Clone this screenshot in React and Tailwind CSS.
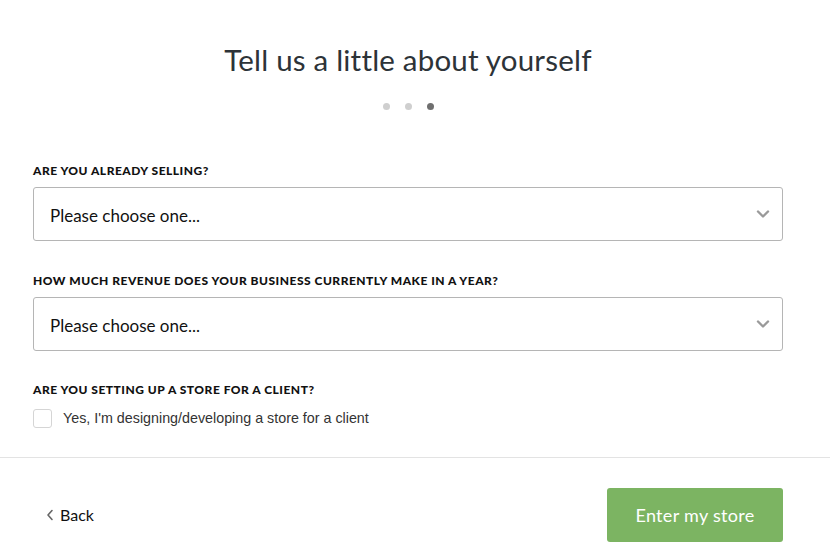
import React from "react";

function Chevron() {
  return (
    <svg className="w-[14px] h-[14px] text-[#9a9a9a]" viewBox="0 0 14 14" fill="none" stroke="currentColor">
      <path d="M2 4.5l5 5 5-5" strokeWidth={2.4} strokeLinecap="round" strokeLinejoin="round" />
    </svg>
  );
}

function SelectField({ label }) {
  return (
    <div>
      <div className="text-[12px] font-black uppercase tracking-[0.5px] text-[#111] leading-none mb-[10px]">{label}</div>
      <div className="h-[54px] border border-[#b5b5b5] rounded-[3px] flex items-center justify-between pl-[16px] pr-[12px]">
        <span className="text-[17px] text-[#111] mt-[3px]">Please choose one...</span>
        <Chevron />
      </div>
    </div>
  );
}

export default function App() {
  return (
    <div className="w-[830px] h-[560px] bg-white overflow-hidden" style={{ fontFamily: "Lato, 'Noto Sans', sans-serif" }}>
      <h1 className="text-center text-[29.5px] text-[#2d3338] pt-[41px] leading-[38px] tracking-[0.2px] pr-[14px]">
        Tell us a little about yourself
      </h1>
      <div className="flex justify-center gap-[15px] mt-[24px] pr-[14px]">
        <span className="w-[7px] h-[7px] rounded-full bg-[#cfcfcf]" />
        <span className="w-[7px] h-[7px] rounded-full bg-[#cfcfcf]" />
        <span className="w-[7px] h-[7px] rounded-full bg-[#6f6f6f]" />
      </div>

      <div className="w-[750px] ml-[33px] mt-[55px] flex flex-col gap-[34px]">
        <SelectField label="Are you already selling?" />
        <SelectField label="How much revenue does your business currently make in a year?" />
      </div>

      <div className="ml-[33px] mt-[33px]">
        <div className="text-[12px] font-black uppercase tracking-[0.5px] text-[#111] leading-none">Are you setting up a store for a client?</div>
        <label className="flex items-center gap-[11px] mt-[12px]">
          <span className="w-[19px] h-[19px] border border-[#d5d5d5] rounded-[3px] bg-white" />
          <span className="text-[14.3px] text-[#333]" style={{ fontFamily: "'Liberation Sans', Arial, sans-serif" }}>
            Yes, I'm designing/developing a store for a client
          </span>
        </label>
      </div>

      <div className="border-t border-[#e3e3e3] mt-[28px] flex items-center justify-between pl-[46px] pr-[47px] pt-[30px]">
        <button className="flex items-center gap-[6px] text-[16px] text-[#111]">
          <svg className="w-[8px] h-[12px] text-[#666]" viewBox="0 0 8 12" fill="none" stroke="currentColor">
            <path d="M6 1.5L2 6l4 4.5" strokeWidth={1.6} strokeLinecap="round" strokeLinejoin="round" />
          </svg>
          Back
        </button>
        <button className="w-[176px] h-[54px] rounded-[3px] bg-[#7cb462] text-white text-[18px] tracking-[0.3px]">
          Enter my store
        </button>
      </div>
    </div>
  );
}
